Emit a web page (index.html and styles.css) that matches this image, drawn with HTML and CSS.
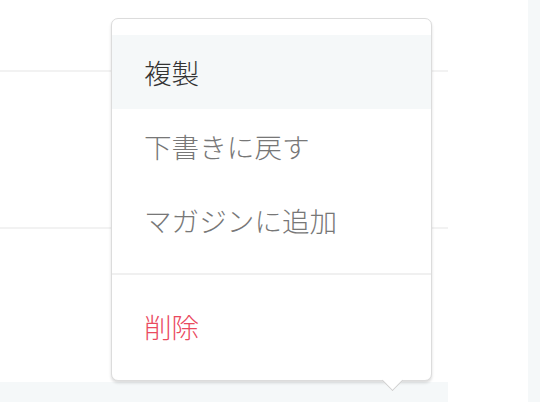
FILE: index.html
```html
<!DOCTYPE html>
<html lang="ja">
<head>
<meta charset="utf-8">
<link rel="stylesheet" href="styles.css">
</head>
<body>
<div class="page">
  <main class="list">
    <div class="row r1"></div>
    <div class="row r2"></div>
    <div class="row r3"></div>
    <div class="band"></div>
  </main>
  <aside class="side"></aside>
  <div class="menu">
    <ul class="group">
      <li class="item active">複製</li>
      <li class="item">下書きに戻す</li>
      <li class="item">マガジンに追加</li>
    </ul>
    <ul class="group danger-group">
      <li class="item danger">削除</li>
    </ul>
  </div>
</div>
</body>
</html>
```

FILE: styles.css
```css
* { box-sizing: border-box; }
html, body { margin: 0; padding: 0; background: #fff; }
body {
  font-family: "Noto Sans CJK JP", "Noto Sans", sans-serif;
  width: 540px;
  height: 402px;
  overflow: hidden;
}
.page {
  position: relative;
  display: flex;
  justify-content: space-between;
  height: 402px;
}
.list {
  width: 448px;
  display: flex;
  flex-direction: column;
}
.row { border-bottom: 2px solid #f2f2f2; }
.r1 { height: 72px; }
.r2 { height: 157px; }
.r3 { height: 153px; border-bottom: 0; }
.band { height: 20px; background: #f5f8f9; }
.side { width: 12px; background: #f5f8f9; }

.menu {
  position: absolute;
  left: 111px;
  top: 18px;
  width: 321px;
  background: #fff;
  border: 1px solid #dcdcdc;
  border-radius: 7px;
  box-shadow: 0 2px 3px rgba(0,0,0,0.14);
  padding: 16px 0 17px;
}
.menu::after {
  content: "";
  position: absolute;
  left: 273px;
  bottom: -8px;
  width: 14px;
  height: 14px;
  background: #fff;
  border-right: 1px solid #cfcfcf;
  border-bottom: 1px solid #cfcfcf;
  transform: rotate(45deg);
}
.group { list-style: none; margin: 0; padding: 0; }
.danger-group {
  margin-top: 16px;
  border-top: 2px solid #f0f0f0;
  padding-top: 14px;
}
.item {
  height: 74px;
  line-height: 74px;
  padding-left: 32px;
  font-size: 27.6px;
  font-weight: 300;
  color: #777;
}
.item.active { background: #f5f8f9; color: #333; }
.item.danger { color: #ea4a5e; }
```
